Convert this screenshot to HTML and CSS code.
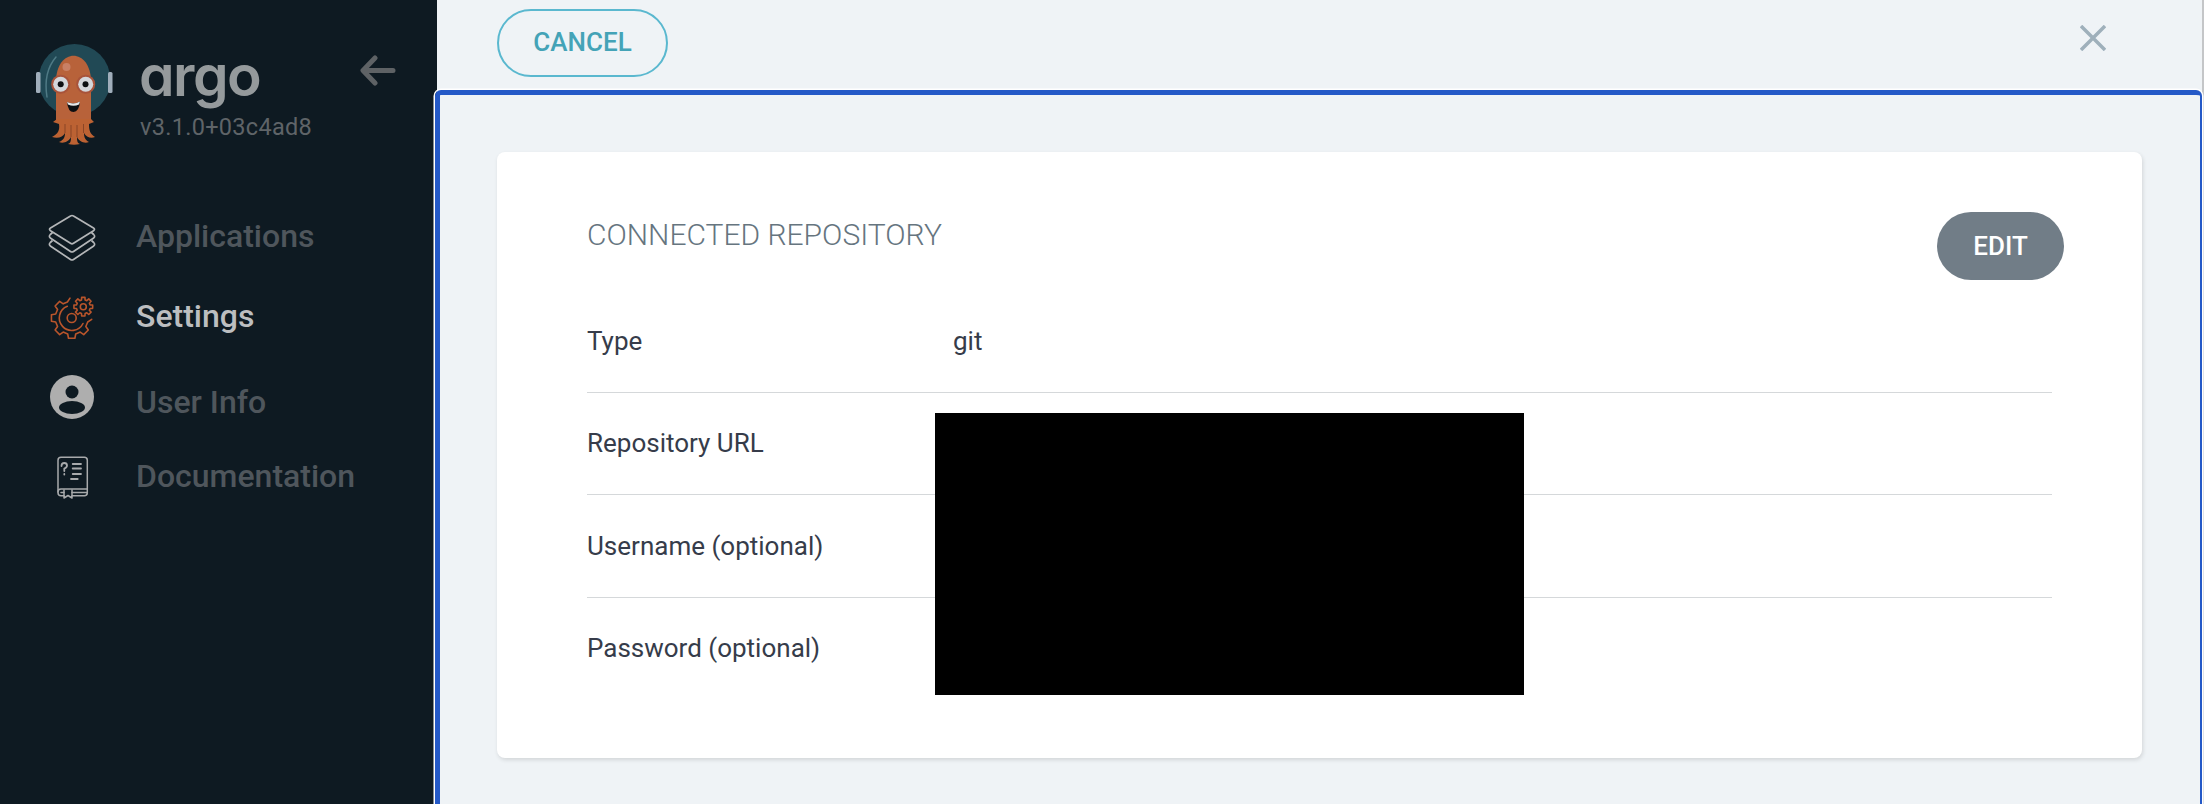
FILE: index.html
```html
<!DOCTYPE html>
<html lang="en">
<head>
<meta charset="utf-8">
<title>Argo CD - Connected repository</title>
<link rel="stylesheet" href="styles.css">
</head>
<body>
<div class="app">
  <nav class="sidebar">
    <div class="brand">
      <svg class="logo" viewBox="30 40 90 110" width="90" height="110" aria-hidden="true">
        <circle cx="74.500" cy="80" r="36" fill="#214955"/>
        <rect x="36" y="72" width="4.500" height="21" rx="1.500" fill="#a0aebb"/>
        <rect x="108" y="72" width="4.500" height="21" rx="1.500" fill="#a0aebb"/>
        <path d="M56 57 Q43 72 47 97" fill="none" stroke="#4f7a85" stroke-width="1.500" stroke-linecap="round"/>
        <path d="M56 122 V82 C56 47 91 47 91 82 V122 Z" fill="#b8623a"/>
        <path d="M57 119 L53 122 L59 124 C60 130 58 134 52 137 C58 139 63 137 65 133 C65 137 64 140 59 142 C64 144 69 141 71 137 C71 140 71 143 68 144 C72 145 76 145 80 144 C77 143 77 140 77 137 C79 141 84 144 89 142 C85 140 84 137 84 133 C86 137 91 139 95 137 C90 134 89 130 89 124 L94 122 L91 119 Z" fill="#bc6233"/>
        <path d="M65 124 V133 M71 125 V137 M77 125 V137 M83.500 124 V133" stroke="#8a4526" stroke-width="1" fill="none"/>
        <circle cx="60.700" cy="84.300" r="9.500" fill="#a8533a"/>
        <circle cx="85.700" cy="84.300" r="9.500" fill="#a8533a"/>
        <circle cx="60.700" cy="84.300" r="7.500" fill="#d4d6da"/>
        <circle cx="85.700" cy="84.300" r="7.500" fill="#d4d6da"/>
        <circle cx="60.700" cy="84.300" r="3" fill="#0d0f12"/>
        <circle cx="85.500" cy="84.300" r="3" fill="#0d0f12"/>
        <path d="M67 102 Q73.500 105 80 101.500 Q79 112 73.500 112 Q68 112 67 102 Z" fill="#0d0f12"/>
        <path d="M67 102 Q73.500 105 80 101.500 L79 104.500 Q73.500 107 68 104.500 Z" fill="#e8e8e8"/>
        <circle cx="66.500" cy="67" r="4" fill="#c98065"/>
      </svg>
      <div class="brand-text">
        <div class="wordmark">argo</div>
        <div class="version">v3.1.0+03c4ad8</div>
      </div>
      <svg class="collapse" viewBox="0 0 36 32" width="36" height="32" aria-hidden="true">
        <path d="M33 15.500 H4 M15 3 L3 15.500 L15 28" fill="none" stroke="#5e6265" stroke-width="5" stroke-linecap="round" stroke-linejoin="round"/>
      </svg>
    </div>
    <ul class="nav">
      <li class="nav-item nav-apps">
        <span class="nav-icon">
          <svg viewBox="0 0 48 48" width="48" height="48" fill="none" stroke="#b4b6b8" stroke-width="1.700" stroke-linejoin="round" aria-hidden="true">
            <path d="M22.500 2 Q24 1 25.500 2 L45.500 14 Q47.500 15.300 45.500 16.800 L25.500 29.300 Q24 30.300 22.500 29.300 L2.500 16.800 Q.5 15.300 2.500 14 Z"/>
            <path d="M4.500 18.500 L2.300 20.500 Q.5 22.300 2.300 24 L22.500 37.500 Q24 38.500 25.500 37.500 L45.700 24 Q47.500 22.300 45.700 20.500 L43.500 18.500"/>
            <path d="M4.500 26.500 L2.300 28.500 Q.5 30.300 2.300 32 L22.500 45.500 Q24 46.500 25.500 45.500 L45.700 32 Q47.500 30.300 45.700 28.500 L43.500 26.500"/>
          </svg>
        </span>
        <span>Applications</span>
      </li>
      <li class="nav-item nav-settings active">
        <span class="nav-icon">
          <svg viewBox="0 0 48 48" width="48" height="48" fill="none" stroke="#b9552b" stroke-width="1.600" stroke-linejoin="round" stroke-linecap="round" aria-hidden="true">
            <path d="M22 4.100 L19.400 8.060 L15.200 9.860 L11.650 7.420 L7.100 11.950 L9.560 15.500 L7.700 20 L3.450 20.800 L3.450 27.200 L7.700 28 L9.560 32.500 L7.100 36.050 L11.650 40.600 L15.200 38.100 L19.700 40 L20.500 44.250 L26.900 44.250 L27.700 40 L32.200 38.100 L35.750 40.600 L40.300 36.050 L37.840 32.500 L39.700 28 L43.700 25.300"/>
            <path d="M19.300 12.300 A12.500 12.500 0 1 0 35 29.500"/>
            <circle cx="23.700" cy="24" r="4.500"/>
            <path d="M42.060 10.890 L44.660 11.050 L44.660 14.350 L42.060 14.510 L41.360 16.200 L43.080 18.150 L40.750 20.480 L38.800 18.760 L37.110 19.460 L36.950 22.060 L33.650 22.060 L33.490 19.460 L31.800 18.760 L29.850 20.480 L27.520 18.150 L29.240 16.200 L28.540 14.510 L25.940 14.350 L25.940 11.050 L28.540 10.890 L29.240 9.200 L27.520 7.250 L29.850 4.920 L31.800 6.640 L33.490 5.940 L33.650 3.340 L36.950 3.340 L37.110 5.940 L38.800 6.640 L40.750 4.920 L43.080 7.250 L41.360 9.200 Z"/>
            <circle cx="35.300" cy="12.700" r="3"/>
          </svg>
        </span>
        <span>Settings</span>
      </li>
      <li class="nav-item nav-user">
        <span class="nav-icon">
          <svg viewBox="0 0 48 48" width="48" height="48" aria-hidden="true">
            <circle cx="24" cy="24" r="22" fill="#aeaeae"/>
            <circle cx="24" cy="19" r="6.500" fill="#0e1a22"/>
            <ellipse cx="24" cy="34.500" rx="13" ry="6.500" fill="#0e1a22"/>
          </svg>
        </span>
        <span>User Info</span>
      </li>
      <li class="nav-item nav-docs">
        <span class="nav-icon">
          <svg viewBox="0 0 48 48" width="48" height="48" fill="none" stroke="#a8aaac" stroke-width="1.500" stroke-linejoin="round" stroke-linecap="round" aria-hidden="true">
            <path d="M13 5.300 H36.300 Q39.300 5.300 39.300 8.300 V40.700 Q39.300 43.700 36.300 43.700 H24 M16 43.700 H13 Q10 43.700 10 40.700 V8.300 Q10 5.300 13 5.300"/>
            <path d="M10 40 Q10 37 13 37 H39.300 M13 40.500 H16 M24 40.500 H39"/>
            <path d="M16 38 V46 L20 43.500 L24 46 V38"/>
            <path d="M24.700 12 H33 M24.700 16.500 H33 M24.700 22 H33 M23 27 H29.700" stroke-width="1.800"/>
            <path d="M13.500 14 Q13.500 11 16.300 11 Q19 11 19 13.500 Q19 15.500 16.300 16.500 V19 M16.300 22 V22.500" stroke-width="1.800"/>
          </svg>
        </span>
        <span>Documentation</span>
      </li>
    </ul>
  </nav>
  <main class="main">
    <header class="topbar">
      <button class="btn-cancel" type="button">CANCEL</button>
      <svg class="close" viewBox="0 0 26 26" width="26" height="26" aria-hidden="true">
        <path d="M1 1 L25 25 M25 1 L1 25" stroke="#9fb0bb" stroke-width="3.500" fill="none"/>
      </svg>
    </header>
    <section class="panel">
      <div class="card">
        <div class="card-head">
          <h2 class="card-title">CONNECTED REPOSITORY</h2>
          <button class="btn-edit" type="button">EDIT</button>
        </div>
        <div class="rows">
          <div class="row"><div class="label">Type</div><div class="value">git</div></div>
          <div class="row"><div class="label">Repository URL</div><div class="value"></div></div>
          <div class="row"><div class="label">Username (optional)</div><div class="value"></div></div>
          <div class="row"><div class="label">Password (optional)</div><div class="value"></div></div>
        </div>
        <div class="redaction"></div>
      </div>
    </section>
  </main>
</div>
</body>
</html>
```

FILE: styles.css
```css
* { box-sizing: border-box; }
html, body { margin: 0; height: 100%; overflow: hidden; }
body { font-family: Roboto, "Liberation Sans", sans-serif; background: #eff3f6; }

.app { display: flex; height: 804px; }

.sidebar { width: 437px; flex: none; background: #0e1a22; }
.brand { display: flex; height: 190px; padding-left: 30px; }
.logo { margin-top: 40px; flex: none; }
.brand-text { margin-left: 19px; padding-top: 42px; width: 221px; flex: none; }
.wordmark { font-family: Inter, Lato, sans-serif; font-feature-settings: "cv11" 1; font-size: 57px; font-weight: 600; line-height: 68px; color: #959a9c; letter-spacing: -1.500px; }
.version { font-size: 23.500px; line-height: 28px; color: #5f6468; margin: 3px 0 0 1px; letter-spacing: .3px; }
.collapse { margin-top: 55px; flex: none; }

.nav { list-style: none; margin: 0; padding: 0; }
.nav-item { display: flex; align-items: center; font-size: 32px; font-weight: 500; color: #4f565c; height: 48px; }
.nav-icon { width: 136px; padding-left: 48px; flex: none; display: flex; }
.nav-apps { margin-top: 22px; }
.nav-apps .nav-icon { margin-top: 4px; }
.nav-settings { margin-top: 32px; color: #bcbec0; }
.nav-settings .nav-icon { margin-top: 4px; }
.nav-user { margin-top: 38px; }
.nav-user .nav-icon { margin-bottom: 10px; }
.nav-docs { margin-top: 26px; }

.main { flex: 1; min-width: 0; display: flex; flex-direction: column; box-shadow: inset -2px 0 0 #c4c6c8; }
.topbar { height: 90px; flex: none; display: flex; align-items: flex-start; justify-content: space-between; padding: 9px 98px 0 60px; }
.btn-cancel { width: 171px; height: 68px; border: 2px solid #5ab8cf; border-radius: 34px; background: transparent; color: #44a3b7; font: 500 26px Roboto, sans-serif; padding: 0 0 2px; }
.close { margin-top: 16px; }

.panel { flex: 1; margin: 0 2px 0 -2px; padding: 57px 58px 0 57px; border: solid #2459c7; border-width: 5px 2px 0 5px; border-radius: 6px 6px 0 0; box-shadow: 0 0 0 1.500px #fff; }

.card { position: relative; background: #fff; border-radius: 8px; box-shadow: 1px 2px 4px rgba(0,0,0,.12); padding: 0 90px 57px; height: 606px; }
.card-head { display: flex; justify-content: space-between; align-items: flex-start; height: 138px; margin-right: -12px; }
.card-title { margin: 66px 0 0; font-size: 30px; line-height: 34px; font-weight: 300; color: #66757f; }
.btn-edit { width: 127px; height: 68px; margin-top: 60px; border: 0; border-radius: 34px; background: #717d87; color: #fff; font: 500 26px Roboto, sans-serif; padding: 0; }

.row { display: flex; align-items: center; height: 102.500px; border-bottom: 1.500px solid #d5d8da; color: #363c4a; font-size: 26px; }
.row:last-child { border-bottom-color: transparent; }
.label { width: 366px; flex: none; }

.redaction { position: absolute; left: 438px; top: 261px; width: 589px; height: 282px; background: #000; }
```
